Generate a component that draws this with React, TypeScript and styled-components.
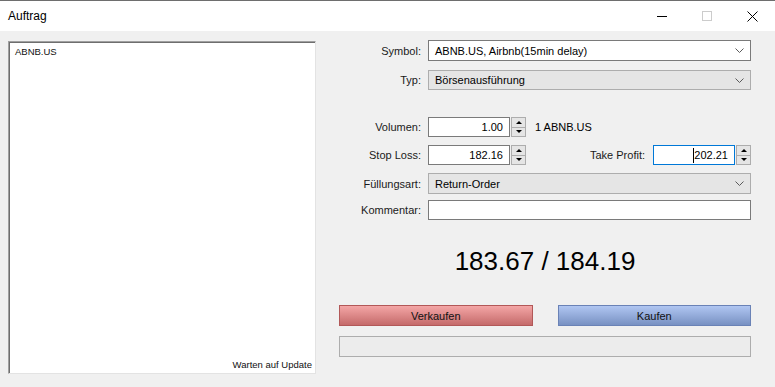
import React from 'react';
import styled, { createGlobalStyle } from 'styled-components';

const GlobalStyle = createGlobalStyle`
    html, body {
        margin: 0;
        padding: 0;
        background: #f0f0f0;
    }
    body {
        font-family: "Liberation Sans", Arial, sans-serif;
        font-size: 11px;
        color: #000;
    }
`;

const Chevron = () => (
    <svg width='9' height='5' viewBox='0 0 9 5'>
        <polyline points='0.5,0.5 4.5,4.5 8.5,0.5' fill='none' stroke='#5a5a5a' strokeWidth='1' />
    </svg>
);

const SpinButton: React.FC = () => (
    <SSpin>
        <SSpinHalf>
            <SArrow $up />
        </SSpinHalf>
        <SSpinHalf>
            <SArrow />
        </SSpinHalf>
    </SSpin>
);

const App: React.FC = () => {
    return (
        <>
            <GlobalStyle />
            <SWindow>
                <STitleBar>
                    <STitle>Auftrag</STitle>
                    <SCaptionButton>
                        <SMinimize />
                    </SCaptionButton>
                    <SCaptionButton>
                        <SMaximize />
                    </SCaptionButton>
                    <SCaptionButton>
                        <svg width='11' height='11' viewBox='0 0 11 11'>
                            <path d='M0.5 0.5 L10.5 10.5 M10.5 0.5 L0.5 10.5' stroke='#000' strokeWidth='1' />
                        </svg>
                    </SCaptionButton>
                </STitleBar>

                <SBody>
                    <SQuotePanel>
                        <span>ABNB.US</span>
                        <SStatus>Warten auf Update</SStatus>
                    </SQuotePanel>

                    <SForm>
                        <SRow $h={21}>
                            <SLabel>Symbol:</SLabel>
                            <SCombo $editable>
                                <span>ABNB.US, Airbnb(15min delay)</span>
                                <Chevron />
                            </SCombo>
                        </SRow>
                        <SRow $h={20} $mt={9}>
                            <SLabel>Typ:</SLabel>
                            <SCombo>
                                <span>Börsenausführung</span>
                                <Chevron />
                            </SCombo>
                        </SRow>

                        <SRow $h={20} $mt={27}>
                            <SLabel>Volumen:</SLabel>
                            <SInline>
                                <SNumberBox>1.00</SNumberBox>
                                <SpinButton />
                                <SUnit>1 ABNB.US</SUnit>
                            </SInline>
                        </SRow>
                        <SRow $h={20} $mt={8}>
                            <SLabel>Stop Loss:</SLabel>
                            <SInline>
                                <SNumberBox>182.16</SNumberBox>
                                <SpinButton />
                                <STakeProfitLabel>Take Profit:</STakeProfitLabel>
                                <SNumberBox $focused>
                                    <SCaret />
                                    202.21
                                </SNumberBox>
                                <SpinButton />
                            </SInline>
                        </SRow>
                        <SRow $h={21} $mt={8}>
                            <SLabel>Füllungsart:</SLabel>
                            <SCombo>
                                <span>Return-Order</span>
                                <Chevron />
                            </SCombo>
                        </SRow>
                        <SRow $h={20} $mt={6}>
                            <SLabel>Kommentar:</SLabel>
                            <STextBox />
                        </SRow>

                        <SPrice>183.67 / 184.19</SPrice>

                        <SButtons>
                            <SActionButton $variant='sell'>Verkaufen</SActionButton>
                            <SActionButton $variant='buy'>Kaufen</SActionButton>
                        </SButtons>
                        <SProgress />
                    </SForm>
                </SBody>
            </SWindow>
        </>
    );
};

export default App;

const SWindow = styled.div`
    width: 775px;
    height: 387px;
    box-sizing: border-box;
    border-top: 1px solid #6e6e6e;
    display: flex;
    flex-direction: column;
    background: #f0f0f0;
    overflow: hidden;
`;

const STitleBar = styled.div`
    height: 30px;
    background: #fff;
    display: flex;
    align-items: center;
    padding-left: 8px;
    font-size: 12px;
`;

const STitle = styled.div`
    flex: 1;
`;

const SCaptionButton = styled.div`
    width: 45px;
    height: 30px;
    display: flex;
    align-items: center;
    justify-content: center;
    &:last-child {
        width: 46px;
    }
`;

const SMinimize = styled.div`
    width: 10px;
    height: 1px;
    background: #000;
`;

const SMaximize = styled.div`
    width: 10px;
    height: 10px;
    box-sizing: border-box;
    border: 1px solid #cccccc;
`;

const SBody = styled.div`
    flex: 1;
    display: flex;
    gap: 23px;
    padding: 9px 24px 0 8px;
`;

const SQuotePanel = styled.div`
    width: 308px;
    height: 333px;
    margin-top: 1px;
    box-sizing: border-box;
    background: #fff;
    border: 1px solid;
    border-color: #a0a0a0 #e3e3e3 #e3e3e3 #a0a0a0;
    box-shadow: inset 1px 1px 0 #6e6e6e, inset -1px -1px 0 #fff;
    display: flex;
    flex-direction: column;
    justify-content: space-between;
    padding: 4px 3px 3px 6px;
    font-size: 9.5px;
    color: #101010;
`;

const SStatus = styled.span`
    align-self: flex-end;
`;

const SForm = styled.div`
    width: 412px;
    display: flex;
    flex-direction: column;
`;

const SRow = styled.div<{ $h: number; $mt?: number }>`
    display: grid;
    grid-template-columns: 82px 1fr;
    column-gap: 7px;
    align-items: center;
    height: ${p => p.$h}px;
    margin-top: ${p => p.$mt || 0}px;
`;

const SLabel = styled.div`
    text-align: right;
    color: #1a1a1a;
`;

const SCombo = styled.div<{ $editable?: boolean }>`
    height: 100%;
    box-sizing: border-box;
    display: flex;
    align-items: center;
    justify-content: space-between;
    padding: 0 6px 0 6px;
    background: ${p => (p.$editable ? '#fff' : '#e5e5e5')};
    border: 1px solid ${p => (p.$editable ? '#7a7a7a' : '#adadad')};
`;

const STextBox = styled.div`
    height: 100%;
    box-sizing: border-box;
    background: #fff;
    border: 1px solid #7a7a7a;
`;

const SInline = styled.div`
    height: 100%;
    display: flex;
    align-items: center;
`;

const SNumberBox = styled.div<{ $focused?: boolean }>`
    width: 82px;
    height: 20px;
    box-sizing: border-box;
    background: #fff;
    border: 1px solid ${p => (p.$focused ? '#0078d7' : '#7a7a7a')};
    display: flex;
    align-items: center;
    justify-content: flex-end;
    padding-right: 6px;
`;

const SCaret = styled.span`
    width: 1px;
    height: 15px;
    background: #000;
`;

const SSpin = styled.div`
    width: 15px;
    height: 20px;
    margin-left: 1px;
    display: flex;
    flex-direction: column;
`;

const SSpinHalf = styled.div`
    flex: 1;
    box-sizing: border-box;
    border: 1px solid #adadad;
    background: #e5e5e5;
    display: flex;
    align-items: center;
    justify-content: center;
    & + & {
        border-top: none;
    }
`;

const SArrow = styled.div<{ $up?: boolean }>`
    width: 0;
    height: 0;
    border-left: 3px solid transparent;
    border-right: 3px solid transparent;
    ${p => (p.$up ? 'border-bottom: 3px solid #000;' : 'border-top: 3px solid #000;')}
`;

const SUnit = styled.span`
    margin-left: 9px;
`;

const STakeProfitLabel = styled.span`
    margin-left: auto;
    margin-right: 8px;
    color: #1a1a1a;
`;

const SPrice = styled.div`
    margin-top: 26px;
    height: 30px;
    line-height: 30px;
    font-size: 26px;
    text-align: center;
    color: #000;
`;

const SButtons = styled.div`
    margin-top: 29px;
    display: grid;
    grid-template-columns: 1fr 1fr;
    column-gap: 25px;
`;

const SActionButton = styled.div<{ $variant: 'sell' | 'buy' }>`
    height: 21px;
    box-sizing: border-box;
    display: flex;
    align-items: center;
    justify-content: center;
    color: #111;
    border: 1px solid ${p => (p.$variant === 'sell' ? '#b25858' : '#6a82b6')};
    background: ${p =>
        p.$variant === 'sell'
            ? 'linear-gradient(#f4a6a6, #c46a6a)'
            : 'linear-gradient(#b0c6f2, #7891c2)'};
`;

const SProgress = styled.div`
    margin-top: 10px;
    height: 21px;
    box-sizing: border-box;
    border: 1px solid #adadad;
    background: #ececec;
`;
